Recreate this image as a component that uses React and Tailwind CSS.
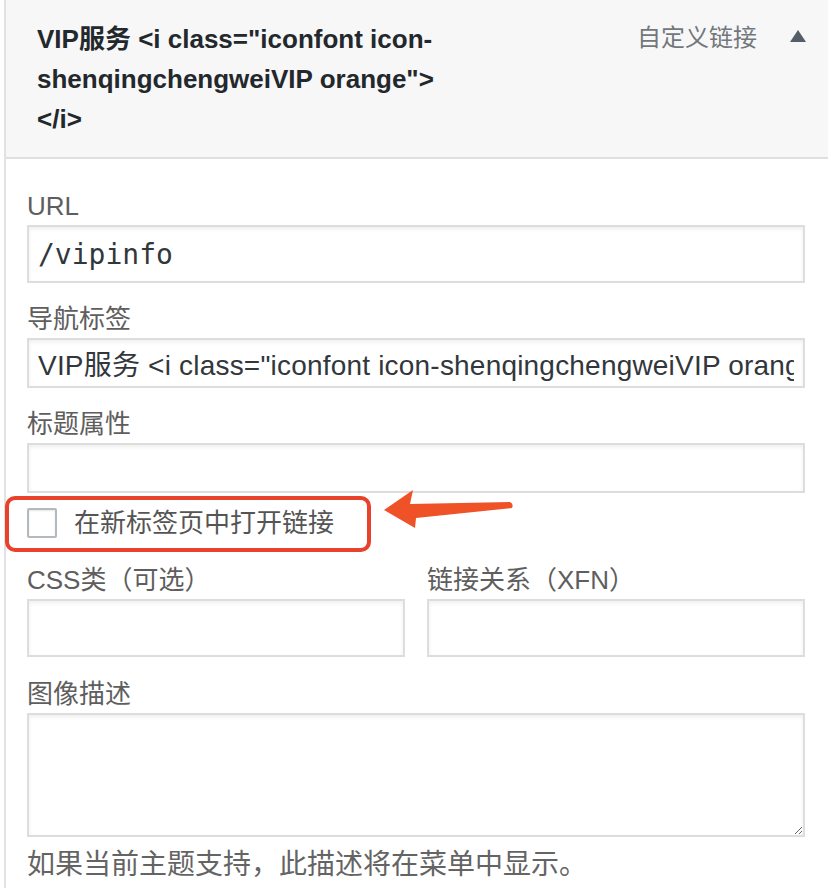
import { useState } from 'react'

const sans = "font-['Liberation_Sans','Noto_Sans_CJK_SC',sans-serif]"

function Field({ label, children, className = '' }) {
  return (
    <div className={className}>
      <div className="h-[38px] leading-[38px] text-[26px] text-[#5e5e5e] whitespace-nowrap">{label}</div>
      {children}
    </div>
  )
}

const inputCls = 'block w-full border-2 border-[#dddddd] bg-white shadow-[inset_0_2px_4px_rgba(0,0,0,0.07)] outline-none px-[9px] text-[#32373c]'

export default function App() {
  const [newTab, setNewTab] = useState(false)

  return (
    <div className={`min-h-screen bg-white pl-[4px] ${sans}`}>
      <div className="border-l-2 border-[#e2e2e2] min-h-[888px]">
        {/* Header */}
        <div className="bg-[#f7f7f7] border-b-2 border-[#e0e0e0] pl-[31px] pr-[21px] pt-[19px] pb-[18px] flex items-start justify-between">
          <h3 className="text-[26px] leading-[40px] font-bold text-[#23282d]">
            VIP服务 &lt;i class="iconfont icon-
            <br />
            shenqingchengweiVIP orange"&gt;
            <br />
            &lt;/i&gt;
          </h3>
          <div className="flex items-center gap-[32px] pt-[1px]">
            <span className="text-[24px] leading-[36px] text-[#72777c]">自定义链接</span>
            <svg width="18" height="14" viewBox="0 0 18 14" className="mt-[-4px]">
              <polygon points="9,1 17,13 1,13" fill="#555d66" />
            </svg>
          </div>
        </div>

        {/* Body */}
        <div className="pl-[21px] pr-[23px] pt-[28px]">
          <Field label="URL">
            <input
              readOnly
              defaultValue="/vipinfo"
              className={`${inputCls} h-[58px] text-[28px] font-['DejaVu_Sans_Mono',monospace]`}
            />
          </Field>

          <Field label="导航标签" className="mt-[17px]">
            <input
              readOnly
              defaultValue={'VIP服务 <i class="iconfont icon-shenqingchengweiVIP orange"></i>'}
              className={`${inputCls} ${sans} h-[50px] text-[28px] tracking-[0.2px]`}
            />
          </Field>

          <Field label="标题属性" className="mt-[17px]">
            <input readOnly className={`${inputCls} ${sans} h-[50px] text-[28px]`} />
          </Field>

          {/* Checkbox row with annotation */}
          <div className="relative pt-[12px] pb-[20px]">
            <label className="flex items-center gap-[17px] cursor-pointer">
              <input
                type="checkbox"
                checked={newTab}
                onChange={e => setNewTab(e.target.checked)}
                className="appearance-none w-[30px] h-[30px] border-2 border-[#b4b9be] rounded-[2px] bg-white shadow-[inset_0_1px_2px_rgba(0,0,0,0.1)] shrink-0"
              />
              <span className="text-[26px] leading-[36px] text-[#555555]">在新标签页中打开链接</span>
            </label>
            {/* red highlight box */}
            <div className="absolute left-[-22px] top-[3px] w-[366px] h-[56px] border-4 border-[#e8412c] rounded-[10px] pointer-events-none" />
            {/* arrow */}
            <svg
              className="absolute left-[355px] top-[-3px] pointer-events-none"
              width="134"
              height="44"
              viewBox="0 0 134 44"
            >
              <path
                d="M2 20 L31 0 L28 14 L128 12 Q132 14 130 18 L34 28 L33 38 Z"
                fill="#f05228"
              />
            </svg>
          </div>

          <div className="grid grid-cols-2 gap-x-[22px]">
            <Field label="CSS类（可选）">
              <input readOnly className={`${inputCls} ${sans} h-[58px] text-[28px]`} />
            </Field>
            <Field label="链接关系（XFN）">
              <input readOnly className={`${inputCls} ${sans} h-[58px] text-[28px]`} />
            </Field>
          </div>

          <Field label="图像描述" className="mt-[18px]">
            <textarea readOnly className={`${inputCls} ${sans} h-[124px] text-[28px]`} />
          </Field>

          <p className="mt-[9px] text-[28px] leading-[38px] text-[#646464] whitespace-nowrap">
            如果当前主题支持，此描述将在菜单中显示。
          </p>
        </div>
      </div>
    </div>
  )
}
